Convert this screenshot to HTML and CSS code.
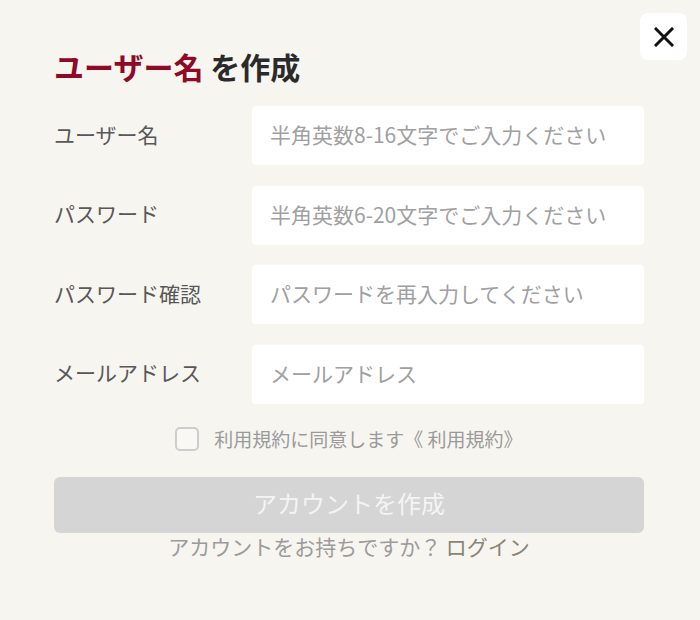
FILE: index.html
```html
<!DOCTYPE html>
<html lang="ja">
<head>
<meta charset="utf-8">
<title>ユーザー名 を作成</title>
<link rel="stylesheet" href="styles.css">
</head>
<body>
<div class="modal">
  <button class="close" type="button" aria-label="閉じる">
    <svg viewBox="0 0 20 20" width="20" height="20"><path d="M2 2 L18 18 M18 2 L2 18" stroke="#111" stroke-width="3" stroke-linecap="square" fill="none"/></svg>
  </button>
  <h1 class="title"><span class="accent">ユーザー名</span> を作成</h1>
  <form class="form">
    <div class="row">
      <label class="label">ユーザー名</label>
      <input class="field" type="text" placeholder="半角英数8-16文字でご入力ください">
    </div>
    <div class="row">
      <label class="label">パスワード</label>
      <input class="field" type="password" placeholder="半角英数6-20文字でご入力ください">
    </div>
    <div class="row">
      <label class="label">パスワード確認</label>
      <input class="field" type="password" placeholder="パスワードを再入力してください">
    </div>
    <div class="row">
      <label class="label">メールアドレス</label>
      <input class="field" type="email" placeholder="メールアドレス">
    </div>
    <label class="agree">
      <input class="check" type="checkbox">
      <span>利用規約に同意します《 利用規約》</span>
    </label>
    <button class="submit" type="button">アカウントを作成</button>
    <p class="login">アカウントをお持ちですか？ <a class="login-link" href="#">ログイン</a></p>
  </form>
</div>
</body>
</html>
```

FILE: styles.css
```css
html, body {
  margin: 0;
  padding: 0;
  background: #f7f5f0;
}
body {
  font-family: "Noto Sans CJK JP", "Noto Sans", sans-serif;
  color: #555;
}
.modal {
  position: relative;
  width: 700px;
  height: 620px;
  box-sizing: border-box;
  padding: 46px 56px 0 54px;
}
.close {
  position: absolute;
  top: 13px;
  right: 13px;
  width: 47px;
  height: 47px;
  border: none;
  border-radius: 8px;
  background: #fff;
  padding: 0;
  display: flex;
  align-items: center;
  justify-content: center;
  cursor: pointer;
}
.title {
  margin: 0;
  font-size: 30px;
  line-height: 40px;
  font-weight: 700;
  color: #2a2a2a;
}
.accent {
  color: #8e0a26;
}
.form {
  margin: 20px 0 0;
  display: flex;
  flex-direction: column;
}
.row {
  display: flex;
  align-items: center;
  height: 59px;
  margin-bottom: 20.5px;
}
.row:last-of-type {
  margin-bottom: 0;
}
.label {
  width: 198px;
  flex: none;
  font-size: 21px;
  line-height: 30px;
  padding-bottom: 4px;
  color: #585858;
}
.field {
  flex: 1;
  height: 59px;
  box-sizing: border-box;
  border: none;
  border-radius: 4px;
  background: #fff;
  padding: 0 18px 3px;
  font-family: inherit;
  font-size: 21px;
  color: #333;
  outline: none;
}
.field::placeholder {
  color: #a0a0a0;
}
.agree {
  display: flex;
  align-items: center;
  justify-content: center;
  gap: 15px;
  margin-top: 23px;
  height: 24px;
  font-size: 19px;
  color: #9a9a9a;
}
.check {
  appearance: none;
  -webkit-appearance: none;
  margin: 0;
  width: 24px;
  height: 24px;
  box-sizing: border-box;
  border: 2.5px solid #cdcdcd;
  border-radius: 5px;
  background: #f9f8f5;
}
.submit {
  margin-top: 26px;
  height: 56px;
  border: none;
  border-radius: 6px;
  background: #d5d5d5;
  color: #f4f4f4;
  font-family: inherit;
  font-size: 24px;
  padding: 0 0 5px;
}
.login {
  margin: 0;
  text-align: center;
  font-size: 21px;
  line-height: 27px;
  color: #9b9b9b;
}
.login-link {
  color: #8a8474;
  text-decoration: none;
}
```
